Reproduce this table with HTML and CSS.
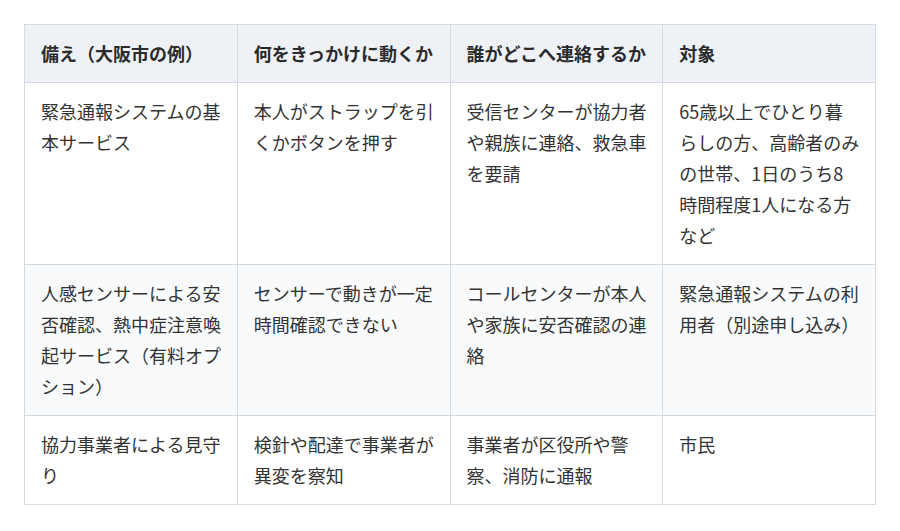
FILE: index.html
```html
<!DOCTYPE html>
<html lang="ja">
<head>
<meta charset="utf-8">
<link rel="stylesheet" href="styles.css">
</head>
<body>
<div class="page">
<table class="tbl">
  <thead>
    <tr>
      <th>備え（大阪市の例）</th>
      <th>何をきっかけに動くか</th>
      <th>誰がどこへ連絡するか</th>
      <th>対象</th>
    </tr>
  </thead>
  <tbody>
    <tr>
      <td>緊急通報システムの基本サービス</td>
      <td>本人がストラップを引くかボタンを押す</td>
      <td>受信センターが協力者や親族に連絡、救急車を要請</td>
      <td>65歳以上でひとり暮らしの方、高齢者のみの世帯、1日のうち8時間程度1人になる方など</td>
    </tr>
    <tr class="alt">
      <td>人感センサーによる安否確認、熱中症注意喚起サービス（有料オプション）</td>
      <td>センサーで動きが一定時間確認できない</td>
      <td>コールセンターが本人や家族に安否確認の連絡</td>
      <td>緊急通報システムの利用者（別途申し込み）</td>
    </tr>
    <tr>
      <td>協力事業者による見守り</td>
      <td>検針や配達で事業者が異変を察知</td>
      <td>事業者が区役所や警察、消防に通報</td>
      <td>市民</td>
    </tr>
  </tbody>
</table>
</div>
</body>
</html>
```
FILE: styles.css
```css
html, body {
  margin: 0;
  padding: 0;
  background: #ffffff;
}
.page {
  padding: 24px;
}
.tbl {
  width: 852px;
  table-layout: fixed;
  border-collapse: collapse;
  font-family: "Noto Sans CJK JP", "Noto Sans", sans-serif;
  font-size: 18px;
  line-height: 31px;
  color: #333333;
}
.tbl th,
.tbl td {
  border: 1px solid #d5dae0;
  padding: 13px 15px 13px 16px;
  text-align: left;
  vertical-align: top;
  word-break: normal;
}
.tbl th {
  background: #eef2f7;
  font-weight: 700;
  color: #2b2b2b;
}
.tbl .alt td {
  background: #f8fafc;
}
```
